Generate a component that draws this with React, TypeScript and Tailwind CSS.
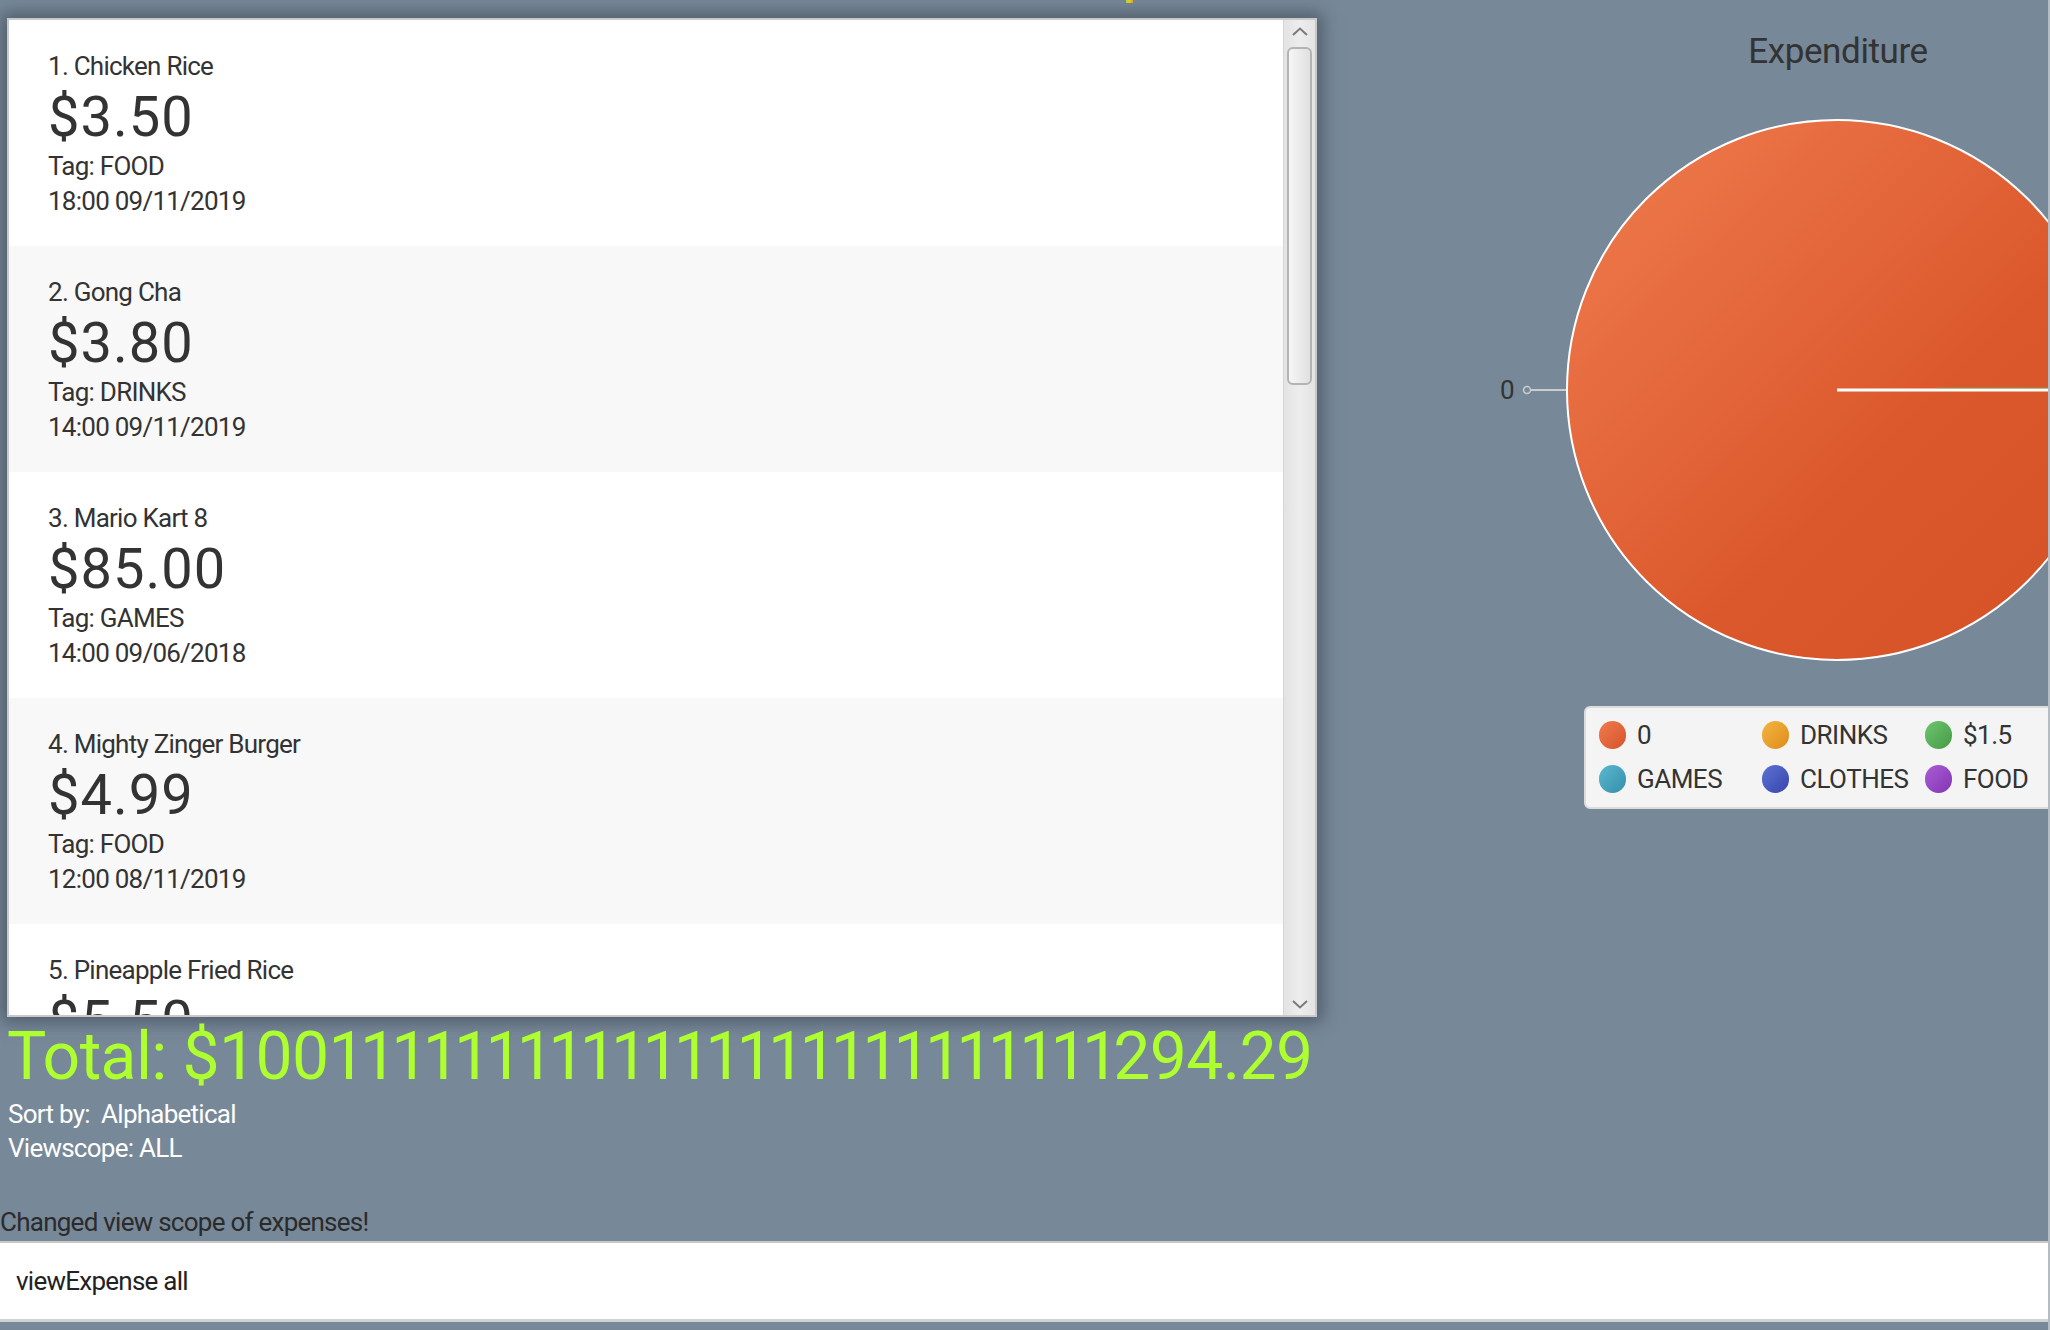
import React from "react";

const expenses = [
  { name: "Chicken Rice", price: "$3.50", tag: "FOOD", date: "18:00 09/11/2019" },
  { name: "Gong Cha", price: "$3.80", tag: "DRINKS", date: "14:00 09/11/2019" },
  { name: "Mario Kart 8", price: "$85.00", tag: "GAMES", date: "14:00 09/06/2018" },
  { name: "Mighty Zinger Burger", price: "$4.99", tag: "FOOD", date: "12:00 08/11/2019" },
  { name: "Pineapple Fried Rice", price: "$5.50", tag: "FOOD", date: "18:00 07/11/2019" },
];

const legend = [
  { label: "0", dot: "from-[#ef7b4e] to-[#d6522a]" },
  { label: "DRINKS", dot: "from-[#f4b540] to-[#de8c18]" },
  { label: "$1.5", dot: "from-[#70c470] to-[#449c44]" },
  { label: "GAMES", dot: "from-[#5cb8cf] to-[#3390ab]" },
  { label: "CLOTHES", dot: "from-[#5d72d2] to-[#3845ad]" },
  { label: "FOOD", dot: "from-[#a95ed3] to-[#8333b5]" },
];

function ExpenseCard({ index, item }: { index: number; item: (typeof expenses)[0] }) {
  return (
    <div
      className={
        "h-[226px] shrink-0 pl-[39px] pt-[28px] text-[#333] " +
        (index % 2 === 0 ? "bg-white" : "bg-[#f8f8f8]")
      }
    >
      <div className="text-[26px] leading-[36px] tracking-[-0.75px]">
        {index + 1}. {item.name}
      </div>
      <div className="mt-[5px] text-[56px] leading-[56px] tracking-[1px]">{item.price}</div>
      <div className="mt-[4px] text-[26px] leading-[35px] tracking-[-0.75px]">Tag: {item.tag}</div>
      <div className="text-[26px] leading-[35px] tracking-[-0.75px]">{item.date}</div>
    </div>
  );
}

function Chevron({ up }: { up?: boolean }) {
  return (
    <svg width="16" height="9" viewBox="0 0 16 9">
      <polyline
        points={up ? "1,8 8,1.5 15,8" : "1,1 8,7.5 15,1"}
        fill="none"
        stroke="#7a7a7a"
        strokeWidth="2"
      />
    </svg>
  );
}

function ScrollBar() {
  return (
    <div className="flex w-[32px] shrink-0 flex-col items-center border-l border-[#d6d6d6] bg-linear-to-r from-[#e3e3e3] via-[#ededed] to-[#e3e3e3]">
      <div className="flex h-[27px] items-start pt-[7px]">
        <Chevron up />
      </div>
      <div className="h-[338px] w-[25px] rounded-[6px] border-2 border-[#b3b3b3] bg-linear-to-r from-[#f6f6f6] to-[#e0e0e0]" />
      <div className="flex-1" />
      <div className="flex h-[15px] items-start">
        <Chevron />
      </div>
    </div>
  );
}

function PieChart() {
  return (
    <svg width="731" height="580" viewBox="0 0 731 580" className="block">
      <defs>
        <linearGradient id="pie" x1="0" y1="0" x2="1" y2="1">
          <stop offset="0" stopColor="#f07d50" />
          <stop offset="0.6" stopColor="#db582c" />
          <stop offset="1" stopColor="#d55026" />
        </linearGradient>
      </defs>
      <line x1="213" y1="290" x2="250" y2="290" stroke="#c9cdd2" strokeWidth="2" />
      <circle cx="210" cy="290" r="3.5" fill="none" stroke="#c9cdd2" strokeWidth="1.5" />
      <text x="183" y="299" fontSize="26" fill="#333" fontFamily="Roboto, sans-serif">
        0
      </text>
      <circle cx="520" cy="290" r="270" fill="url(#pie)" stroke="#ffffff" strokeWidth="2" />
      <line x1="520" y1="290" x2="731" y2="290" stroke="#ffffff" strokeWidth="3" />
      <line x1="620" y1="288" x2="731" y2="288" stroke="#6cbf6c" strokeWidth="1" opacity="0.6" />
    </svg>
  );
}

export default function App() {
  return (
    <div className="flex h-[1330px] w-[2050px] overflow-hidden bg-[#778899] font-['Roboto',sans-serif]">
      <div className="flex w-[2048px] shrink-0 flex-col">
        <div className="flex">
          {/* left: expense list */}
          <div className="w-[1317px] shrink-0 pl-[7px]">
            <div className="ml-[1119px] h-[3px] w-[7px] bg-linear-to-r from-[#9be33a] via-[#f2d21c] to-[#f0a020]" />
            <div className="mt-[15px] flex h-[999px] w-[1310px] overflow-hidden border-2 border-[#c9c9c9] bg-white shadow-[0_0_16px_5px_rgba(45,55,66,0.55)]">
              <div className="flex flex-1 flex-col overflow-hidden">
                {expenses.map((e, i) => (
                  <ExpenseCard key={i} index={i} item={e} />
                ))}
              </div>
              <ScrollBar />
            </div>
            <div className="mt-[7px] whitespace-nowrap text-[66px] leading-[66px] tracking-[-0.6px] text-[#adff2f]">
              Total: $100
              <span className="tracking-[-5.7px]">1111111111111111111111111</span>
              294.29
            </div>
            <div className="mt-[7px] pl-[1px] text-[26px] leading-[34px] tracking-[-0.75px] text-white">
              <div className="whitespace-pre">Sort by:  Alphabetical</div>
              <div>Viewscope: ALL</div>
            </div>
          </div>

          {/* right: chart */}
          <div className="flex-1 overflow-hidden">
            <div className="ml-[321px] w-[400px] pt-[34px] text-center text-[35px] leading-[35px] tracking-[-0.4px] text-[#333]">
              Expenditure
            </div>
            <div className="mt-[31px]">
              <PieChart />
            </div>
            <div className="ml-[267px] mt-[26px] h-[103px] w-[480px] rounded-[6px] border-2 border-[#dcdcdc] bg-[#f4f4f4] pl-[13px] pt-[13px]">
              <div className="grid grid-cols-[163px_163px_163px] gap-y-[16px]">
                {legend.map((l) => (
                  <div key={l.label} className="flex h-[28px] items-center gap-[11px]">
                    <span className={"h-[28px] w-[27px] rounded-full bg-linear-to-br " + l.dot} />
                    <span className="text-[26px] leading-[28px] tracking-[-0.5px] text-[#333]">{l.label}</span>
                  </div>
                ))}
              </div>
            </div>
          </div>
        </div>

        <div className="mt-[40px] whitespace-nowrap text-[26px] leading-[34px] tracking-[-0.75px] text-[#2b2b2b]">
          Changed view scope of expenses!
        </div>
        <div className="mt-[2px] flex h-[81px] items-center border-t-2 border-b-[3px] border-t-[#c8c8c8] border-b-[#d2d2d2] bg-white pl-[16px] text-[26px] tracking-[-0.75px] text-[#222]">
          viewExpense all
        </div>
      </div>
      <div className="w-[2px] shrink-0 bg-[#b5bcc4]" />
    </div>
  );
}
